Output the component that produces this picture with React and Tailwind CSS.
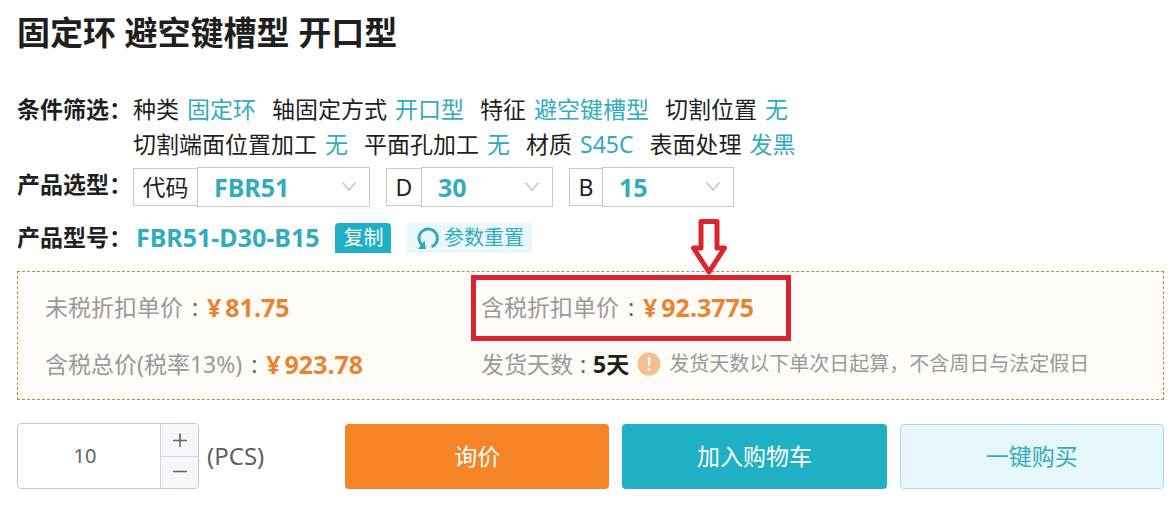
import React, { useState } from 'react';

const filters = [
  [
    { name: '种类', value: '固定环' },
    { name: '轴固定方式', value: '开口型' },
    { name: '特征', value: '避空键槽型' },
    { name: '切割位置', value: '无' },
  ],
  [
    { name: '切割端面位置加工', value: '无' },
    { name: '平面孔加工', value: '无' },
    { name: '材质', value: 'S45C' },
    { name: '表面处理', value: '发黑' },
  ],
];

const RowLabel = ({ children }) => (
  <div className="w-[116px] shrink-0 whitespace-nowrap font-bold">{children}</div>
);

const SpecSelect = ({ id, label, value, labelWidth, selectWidth }) => (
  <div className="flex items-center">
    <label
      htmlFor={id}
      className={`h-[38px] border border-r-0 border-[#c9c9c9] text-center leading-[36px] ${labelWidth}`}
    >
      {label}
    </label>
    <div className={`relative ${selectWidth}`}>
      <select
        id={id}
        defaultValue={value}
        className="h-10 w-full appearance-none border border-[#c9c9c9] bg-white pl-4 text-[25px] font-bold text-[#31acbd]"
      >
        <option>{value}</option>
      </select>
      <svg
        className="pointer-events-none absolute top-[14px] right-[13px] h-[11px] w-4"
        viewBox="0 0 16 11"
        fill="none"
        stroke="#c4c6ca"
        strokeWidth="1.6"
      >
        <path d="M1.5 1.5 8 9l6.5-7.5" />
      </svg>
    </div>
  </div>
);

const PriceLine = ({ label, price }) => (
  <div className="flex items-center whitespace-nowrap">
    <span className="text-[#999]">{label}</span>
    <span className="w-6 text-center text-[#666]">:</span>
    <span className="flex gap-1 text-[25px] font-bold text-[#e8842f]">
      <span>¥</span>
      <span>{price}</span>
    </span>
  </div>
);

const ResetIcon = () => (
  <svg className="h-6 w-6" viewBox="0 0 24 24" fill="none">
    <path d="M15.500 20.800A9.200 9.200 0 1 0 6 19" stroke="#2aa9bb" strokeWidth="2.800" />
    <path d="M8.500 14.500 10 23H2z" fill="#2aa9bb" />
  </svg>
);

const Highlight = () => (
  <>
    <div className="pointer-events-none absolute -top-[15px] -left-[10px] h-[66px] w-[320px] border-[5px] border-[#da2430]" />
    <svg
      className="pointer-events-none absolute -top-[71px] left-[209px] h-[56px] w-[38px]"
      viewBox="0 0 38 56"
      fill="white"
      stroke="#da2430"
      strokeWidth="5"
      strokeLinejoin="round"
    >
      <path d="M11 2.500H27V29H34.500L19 53 3.500 29H11z" />
    </svg>
  </>
);

const App = () => {
  const [count, setCount] = useState(10);

  return (
    <main className="bg-white px-[17px] pt-2 text-[23px] leading-[35px] text-[#1f1f1f] font-['Noto_Sans','Noto_Sans_CJK_SC',sans-serif]">
      <h1 className="text-[33px] leading-[50px] font-bold">固定环 避空键槽型 开口型</h1>

      <section className="mt-[34px] flex">
        <RowLabel>条件筛选：</RowLabel>
        <div>
          {filters.map((row, index) => (
            <div key={index} className="flex gap-x-4 whitespace-nowrap">
              {row.map((item) => (
                <div key={item.name} className="flex gap-2">
                  <span>{item.name}</span>
                  <span className="text-[#31acbd]">{item.value}</span>
                </div>
              ))}
            </div>
          ))}
        </div>
      </section>

      <section className="mt-[5px] flex items-start">
        <RowLabel>产品选型：</RowLabel>
        <div className="flex gap-4">
          <SpecSelect id="code" label="代码" value="FBR51" labelWidth="w-16" selectWidth="w-[173px]" />
          <SpecSelect id="diameter" label="D" value="30" labelWidth="w-[35px]" selectWidth="w-[132px]" />
          <SpecSelect id="width" label="B" value="15" labelWidth="w-[33px]" selectWidth="w-[132px]" />
        </div>
      </section>

      <section className="mt-[13px] flex items-center">
        <RowLabel>产品型号：</RowLabel>
        <span className="ml-[3px] text-[25px] font-bold text-[#31acbd]">FBR51-D30-B15</span>
        <button className="ml-4 h-[30px] w-14 rounded-t-sm bg-[#1fb0c6] text-xl leading-[30px] text-white">
          复制
        </button>
        <button className="ml-4 flex h-[30px] w-[125px] items-center justify-center gap-1 bg-[#e9f7fa] text-xl leading-[30px] text-[#31acbd]">
          <ResetIcon />
          参数重置
        </button>
      </section>

      <section className="mt-4 mr-[-8px] grid h-[129px] grid-cols-[436px_1fr] content-center gap-y-[22px] border border-dashed border-[#c08a3a] bg-[#fffbf7] pl-[27px]">
        <PriceLine label="未税折扣单价" price="81.75" />
        <div className="relative">
          <PriceLine label="含税折扣单价" price="92.3775" />
          <Highlight />
        </div>
        <PriceLine label="含税总价(税率13%)" price="923.78" />
        <div className="flex items-center whitespace-nowrap">
          <span className="text-[#999]">发货天数</span>
          <span className="w-5 text-center text-[#666]">:</span>
          <span className="font-bold">5天</span>
          <svg className="mx-2 h-6 w-6" viewBox="0 0 24 24">
            <circle cx="12" cy="12" r="11.500" fill="#f6bd8d" />
            <path d="M10.500 5h3l-.6 9h-1.800z" fill="white" />
            <circle cx="12" cy="17.500" r="1.600" fill="white" />
          </svg>
          <span className="text-xl text-[#999]">发货天数以下单次日起算，不含周日与法定假日</span>
        </div>
      </section>

      <section className="mt-[23px] mr-[-8px] flex items-center">
        <div className="flex w-[328px] shrink-0 items-center gap-2">
          <div className="flex h-[66px] w-[182px] overflow-hidden rounded border border-[#c6c9cf]">
            <input
              type="text"
              aria-label="数量"
              value={count}
              onChange={(e) => setCount(Number(e.target.value) || 0)}
              className="min-w-0 flex-1 pr-2 text-center text-xl text-[#606266]"
            />
            <div className="flex w-[38px] flex-col border-l border-[#d3d6dc] bg-[#f5f7fa]">
              <button
                aria-label="增加"
                onClick={() => setCount(count + 1)}
                className="flex flex-1 items-center justify-center border-b border-[#d3d6dc]"
              >
                <svg className="h-[14px] w-[14px]" viewBox="0 0 14 14" stroke="#606266" strokeWidth="1.600">
                  <path d="M0 7.500h14M7 .5v14" />
                </svg>
              </button>
              <button
                aria-label="减少"
                onClick={() => setCount(Math.max(1, count - 1))}
                className="flex flex-1 items-center justify-center"
              >
                <svg className="h-[14px] w-[14px]" viewBox="0 0 14 14" stroke="#606266" strokeWidth="1.600">
                  <path d="M0 6.500h14" />
                </svg>
              </button>
            </div>
          </div>
          <span className="text-2xl text-[#606060]">(PCS)</span>
        </div>
        <div className="grid flex-1 grid-cols-3 gap-[13px]">
          <button className="h-[65px] rounded bg-[#f58426] text-white">询价</button>
          <button className="h-[65px] rounded bg-[#1fb0c6] text-white">加入购物车</button>
          <button className="h-[65px] rounded border border-[#a9d9e1] bg-[#e7f6fa] text-[#31acbd]">
            一键购买
          </button>
        </div>
      </section>
    </main>
  );
};

export default App;
